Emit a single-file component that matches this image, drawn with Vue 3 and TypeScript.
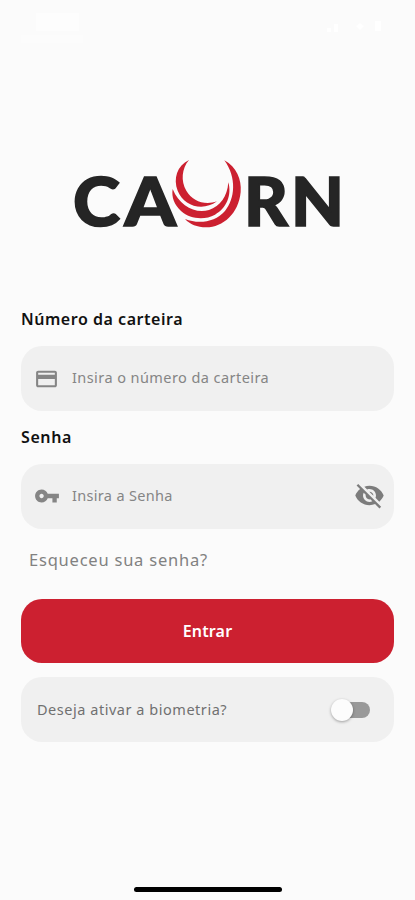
<script setup lang="ts">
import { ref } from 'vue'

const card = ref('')
const password = ref('')
const showPassword = ref(false)
const biometrics = ref(false)
</script>

<template>
  <main class="screen">
    <header class="status" aria-hidden="true">
      <div class="clock"><i></i><i></i></div>
      <svg class="signals" width="58" height="14" viewBox="0 0 58 14">
        <path d="M0 9h4v4H0zM7 5h4v8H7zM29 7l4-3 4 3-4 4zM48 2h6v10h-6z" />
      </svg>
    </header>

    <svg class="logo" width="270" height="72" viewBox="73 158 270 72" role="img" aria-label="CAURN">
      <g class="letters">
        <text x="73" y="226" textLength="47" lengthAdjust="spacingAndGlyphs">C</text>
        <text x="124.5" y="226" textLength="51.5" lengthAdjust="spacingAndGlyphs">A</text>
        <text x="244" y="226" textLength="44" lengthAdjust="spacingAndGlyphs">R</text>
        <text x="291" y="226" textLength="53" lengthAdjust="spacingAndGlyphs">N</text>
      </g>
      <g class="crescents" transform="translate(165 150) scale(.33333)">
        <path d="M72 30C36 47 24 86 38 122C56 168 113 186 156 154C119 167 82 153 64 122C47 94 50 55 72 30Z" />
        <path d="M23 117C43 167 91 193 132 180C166 169 187 140 190 97C201 135 184 176 150 194C119 211 76 208 48 183C28 164 19 142 23 117Z" />
        <path d="M178 31C215 51 230 89 227 126C221 191 174 232 124 232C96 232 75 223 60 207C100 223 151 217 180 183C210 147 216 83 178 31Z" />
      </g>
    </svg>

    <form class="form" @submit.prevent>
      <label class="label number-label" for="card"><span>Número da carteira</span></label>
      <div class="field">
        <svg class="icon card-icon" width="26" height="26" viewBox="0 0 24 24">
          <path d="M20 4H4c-1.11 0-1.99.89-1.99 2L2 18c0 1.11.89 2 2 2h16c1.11 0 2-.89 2-2V6c0-1.11-.89-2-2-2zm0 14H4v-6h16v6zm0-10H4V6h16v2z" />
        </svg>
        <input id="card" v-model="card" class="card-input" placeholder="Insira o número da carteira" />
      </div>
      <label class="label password-label" for="password">Senha</label>
      <div class="field">
        <svg class="icon key-icon" width="26" height="26" viewBox="0 0 24 24">
          <path d="M12.65 10C11.83 7.67 9.61 6 7 6c-3.31 0-6 2.69-6 6s2.69 6 6 6c2.61 0 4.83-1.67 5.65-4H17v4h4v-4h2v-4H12.65zM7 14c-1.1 0-2-.9-2-2s.9-2 2-2 2 .9 2 2-.9 2-2 2z" />
        </svg>
        <input id="password" v-model="password" class="password-input" :type="showPassword ? 'text' : 'password'" placeholder="Insira a Senha" />
        <button class="eye" type="button" aria-label="Mostrar senha" @click="showPassword = !showPassword">
          <svg width="31" height="31" viewBox="0 0 24 24">
            <path d="M12 7c2.76 0 5 2.24 5 5 0 .65-.13 1.26-.36 1.83l2.92 2.92c1.51-1.26 2.7-2.89 3.43-4.75-1.73-4.39-6-7.5-11-7.5-1.4 0-2.74.25-3.98.7l2.16 2.16C10.74 7.13 11.35 7 12 7zM2 4.27l2.28 2.28.46.46C3.08 8.3 1.78 10.02 1 12c1.73 4.39 6 7.5 11 7.5 1.55 0 3.03-.3 4.38-.84l.42.42L19.73 22 21 20.73 3.27 3 2 4.27zM7.53 9.8l1.55 1.55c-.05.21-.08.43-.08.65 0 1.66 1.34 3 3 3 .22 0 .44-.03.65-.08l1.55 1.55c-.67.33-1.41.53-2.2.53-2.76 0-5-2.24-5-5 0-.79.2-1.53.53-2.2zm4.31-.78l3.15 3.15.02-.16c0-1.66-1.34-3-3-3l-.17.01z" />
          </svg>
        </button>
      </div>
      <a class="forgot">Esqueceu sua senha?</a>
      <button class="enter" type="submit">Entrar</button>
      <div class="biometrics">
        <span>Deseja ativar a biometria?</span>
        <button class="switch" :class="{ on: biometrics }" type="button" role="switch" :aria-checked="biometrics" aria-label="Biometria" @click="biometrics = !biometrics">
          <i></i>
        </button>
      </div>
    </form>
    <div class="home"></div>
  </main>
</template>

<style>
body { background: #fbfbfb; }
</style>

<style scoped>
* { box-sizing: border-box; }
.screen {
  width: 100%; height: 900px; display: flex; flex-direction: column;
  padding: 0 21px 8px; background: #fbfbfb; overflow: hidden;
  font-family: "Noto Sans", sans-serif;
}
.status { height: 158px; padding: 13px 11px 0 15px; display: flex; justify-content: space-between; }
.clock { display: flex; flex-direction: column; gap: 4px; }
.clock i { width: 43px; height: 18px; background: #fdfdfd; }
.clock i + i { width: 62px; height: 8px; margin-left: -15px; background: #fcfcfc; }
.signals { margin: 6px -2px 0 0; fill: #fff; }
.logo { flex: none; margin-left: 52px; overflow: visible; }
.letters { fill: #252525; stroke: #252525; stroke-width: 1.6; font: 900 66.5px Lato, sans-serif; }
.crescents { fill: #cc2030; }
.form { display: flex; flex-direction: column; padding-top: 79px; }
.label { height: 37px; line-height: 21px; font-size: 16px; font-weight: 600; color: #111; white-space: nowrap; }
.number-label { letter-spacing: .53px; }
.password-label { margin-top: 16px; letter-spacing: .6px; }
.field { height: 65px; display: flex; align-items: center; padding: 0 9px 0 13px; border-radius: 21px; background: #f0f0f0; }
.icon { flex: none; fill: #858585; }
.card-icon { width: 25px; margin-right: 1px; }
.key-icon { margin-top: -1px; }
input {
  flex: 1; min-width: 0; height: 30px; margin: -4px 0 0 12px; padding: 0; border: 0; outline: 0;
  background: transparent; font: 400 14.5px "Noto Sans", sans-serif; color: #555;
}
input::placeholder { color: #858585; opacity: 1; }
.card-input { letter-spacing: .43px; }
.password-input { letter-spacing: .32px; }
button { font-family: inherit; border: 0; }
.eye { margin-top: -2px; padding: 0; display: flex; background: none; }
.eye svg { fill: #7c7c7c; }
.forgot { height: 70px; padding: 18px 0 0 8px; font-size: 16.5px; line-height: 25px; letter-spacing: .78px; color: #818181; }
.enter { height: 64px; padding: 0 0 1px; border-radius: 21px; background: #cc2030; color: #fff; font-size: 16px; font-weight: 600; letter-spacing: .15px; }
.biometrics {
  height: 65px; margin-top: 14px; padding: 0 24px 0 16px; display: flex; align-items: center; justify-content: space-between;
  border-radius: 21px; background: #f0f0f0; font-size: 14.5px; letter-spacing: .53px; color: #707070;
}
.biometrics span { margin-top: -2px; }
.switch { width: 37px; height: 16px; padding: 0; display: flex; align-items: center; border-radius: 8px; background: #999; }
.switch i { flex: none; width: 22px; height: 22px; margin-left: -2px; border-radius: 50%; background: #fcfcfc; box-shadow: 0 1px 3px rgb(0 0 0 / 35%); }
.switch.on { justify-content: flex-end; background: #dd8790; }
.home { width: 148px; height: 5px; margin: auto auto 0; border-radius: 3px; background: #000; }
</style>
